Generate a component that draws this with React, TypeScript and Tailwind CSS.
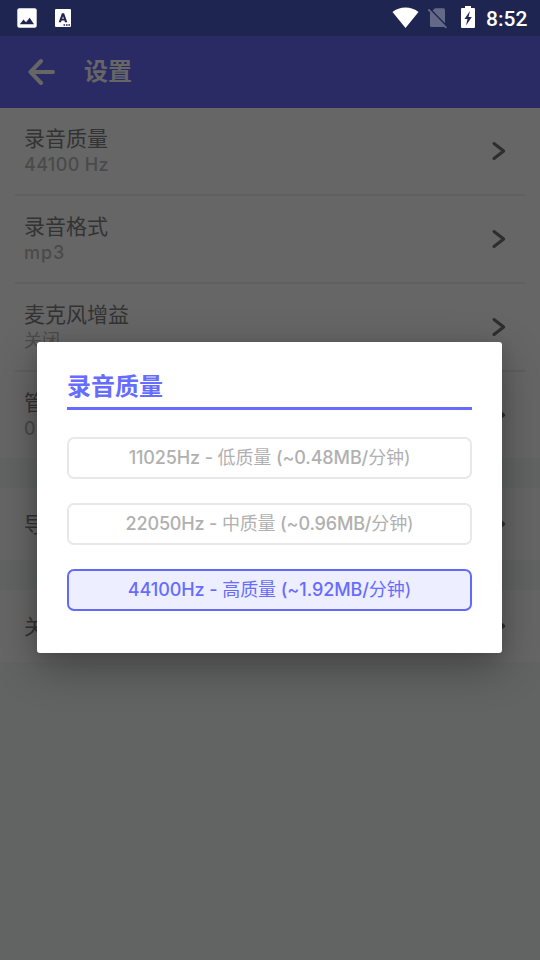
import React from "react";

const latin = "font-['Inter','Noto_Sans_CJK_SC',sans-serif]";

function StatusBar() {
  return (
    <div className="flex h-9 items-center bg-[#1e2550]">
      <svg className="ml-[17px] h-5 w-5" viewBox="0 0 20 20">
        <rect x="0.3" y="0.3" width="19.4" height="19.4" rx="2" fill="#fff" />
        <path d="M2.800 16.300 6.500 11.500 9 14.200 12.700 9.700 17 16.300Z" fill="#1e2550" />
      </svg>
      <svg className="ml-[18px] h-[18px] w-4" viewBox="0 0 16 18">
        <rect width="16" height="18" rx="1" fill="#fff" />
        <path d="M3.700 13.300 6.900 4.300H9.100L12.300 13.300H10L9.400 11.500H6.600L6 13.300ZM7.200 9.700H8.800L8 7.200Z" fill="#1e2550" fillRule="evenodd" />
        <path d="M8.5 15.2h1.6v1.6h-1.6zM11 15.2h1.6v1.6H11zM13.4 15.2H15v1.6h-1.6z" fill="#1e2550" />
      </svg>
      <div className="grow" />
      <svg className="mb-px h-[21px] w-[27px]" viewBox="0 0 27 21">
        <path d="M0.5 5C4 2 8.500 .5 13.500 .5S23 2 26.500 5L13.500 21Z" fill="#fff" />
      </svg>
      <svg className="ml-[9px] h-[21px] w-5" viewBox="0 0 20 21">
        <path d="M7 .2h8.500a1.500 1.500 0 0 1 1.500 1.500V18a1 1 0 0 1-1 1H3.500a1.500 1.500 0 0 1-1.500-1.500V5Z" fill="#646987" />
        <path d="M1.300 .5 19.300 18.900" stroke="#1e2550" strokeWidth="2" />
        <path d="M.4 1.400 18.400 19.800" stroke="#646987" strokeWidth="1.800" />
      </svg>
      <svg className="mb-[2px] ml-[13px] h-[22px] w-[14px]" viewBox="0 0 14 22">
        <path d="M1 2h3V0h6v2h3a1 1 0 0 1 1 1v18a1 1 0 0 1-1 1H1a1 1 0 0 1-1-1V3a1 1 0 0 1 1-1Z" fill="#fff" />
        <path d="M9 5 3.500 13H6.500L5 19.500 10.800 11H7.500Z" fill="#1e2550" />
      </svg>
      <span className="mr-3 ml-[11px] w-[42px] whitespace-nowrap pt-[2px] font-['Roboto',sans-serif] text-[21px] font-medium leading-none text-white">8:52</span>
    </div>
  );
}

function Chevron() {
  return (
    <svg className="h-5 w-4 shrink-0" viewBox="0 0 16 20" fill="none" stroke="#2e2e2e" strokeWidth="3" strokeLinecap="round" strokeLinejoin="round">
      <path d="m4 2.500 9.700 7.500L4 17.500" />
    </svg>
  );
}

function Row({ title, value, tracking = "", divider }: { title: string; value: string; tracking?: string; divider: boolean }) {
  return (
    <div className="bg-[#666666] px-[15px]">
      <div className={`flex items-center justify-between pr-[19px] pl-[9px] ${divider ? "h-[88px] border-b-2 border-[#5f5f5f]" : "h-[86px]"}`}>
        <div className="pt-px">
          <div className="text-[21px] leading-[26px] text-[#333333]">{title}</div>
          <div className={`text-[18px] leading-[25px] text-[#4a4a4a] ${tracking}`}>{value}</div>
        </div>
        <Chevron />
      </div>
    </div>
  );
}

function ShortRow({ title }: { title: string }) {
  return (
    <div className="flex h-[72px] items-center justify-between bg-[#666666] pr-[34px] pl-6 text-[21px] text-[#333333]">
      <span className="pt-px">{title}</span>
      <Chevron />
    </div>
  );
}

interface OptionProps {
  rate: string;
  quality: string;
  size: string;
  tracking: string;
  selected?: boolean;
}

function Option({ rate, quality, size, tracking, selected = false }: OptionProps) {
  return (
    <button
      className={`flex h-[42px] items-center justify-center rounded-[7px] border-2 text-[18px] leading-[26px] whitespace-pre ${tracking} ${
        selected ? "border-[#6369fb] bg-[#edeeff] text-[#666cff]" : "border-[#e8e8e8] bg-white text-[#b0b0b0]"
      }`}
    >
      <span className="font-medium">{rate}</span>
      <span className="font-medium"> - </span>
      <span>{quality}</span>
      <span className="font-medium"> (~{size}MB/</span>
      <span>分钟</span>
      <span>)</span>
    </button>
  );
}

export default function App() {
  return (
    <div className={`relative h-[960px] w-[540px] overflow-hidden bg-[#616462] ${latin}`}>
      <StatusBar />
      <header className="flex h-[72px] items-center bg-[#2a2b65]">
        <svg className="ml-[28px] h-7 w-7" viewBox="0 0 28 28" fill="none" stroke="#666666" strokeWidth="4" strokeLinecap="round" strokeLinejoin="round">
          <path d="M13 3 2.500 14 13 25M2.500 14H25" />
        </svg>
        <h1 className="ml-[28px] text-[24px] font-bold text-[#666666]">设置</h1>
      </header>
      <Row title="录音质量" value="44100 Hz" tracking="font-medium tracking-[0.35px]" divider />
      <Row title="录音格式" value="mp3" tracking="font-medium tracking-[0.9px]" divider />
      <Row title="麦克风增益" value="关闭" divider />
      <Row title="管理" value="0" tracking="font-medium" divider={false} />
      <div className="h-[30px]" />
      <ShortRow title="导入" />
      <div className="h-[30px]" />
      <ShortRow title="关于" />

      <div className="absolute top-[342px] left-[37px] flex h-[311px] w-[465px] flex-col rounded-[3px] bg-white px-[30px] pt-[27px] shadow-[0_14px_44px_rgba(0,0,0,0.32),0_4px_14px_rgba(0,0,0,0.1)]">
        <h2 className="h-[41px] border-b-[3px] border-[#666cff] pt-px text-[24px] leading-[34px] font-bold text-[#666cff]">录音质量</h2>
        <div className="mt-[27px] flex flex-col gap-6">
          <Option rate="11025Hz" quality="低质量" size="0.48" tracking="tracking-[-0.12px]" />
          <Option rate="22050Hz" quality="中质量" size="0.96" tracking="tracking-[-0.16px]" />
          <Option rate="44100Hz" quality="高质量" size="1.92" tracking="tracking-[-0.08px]" selected />
        </div>
      </div>
    </div>
  );
}
